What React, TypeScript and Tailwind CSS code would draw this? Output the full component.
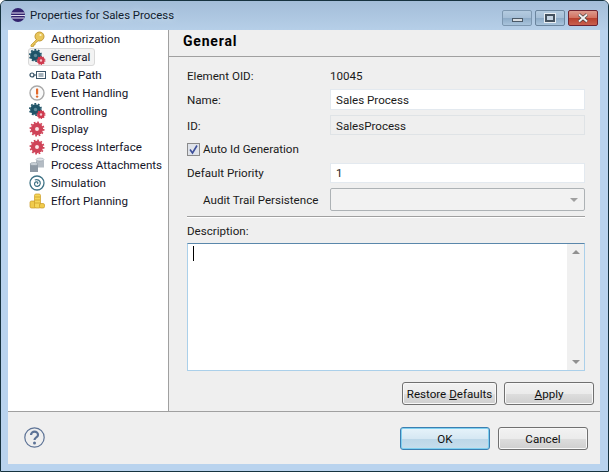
import React from 'react';

const Gear: React.FC<{ x: number; y: number; r: number; color: string; hole: string; teeth?: number }> = ({ x, y, r, color, hole, teeth = 10 }) => (
  <g>
    <circle cx={x} cy={y} r={r * 0.82} fill={color} />
    <circle cx={x} cy={y} r={r * 0.88} fill="none" stroke={color} strokeWidth={r * 0.24} strokeDasharray={`${(2 * Math.PI * r * 0.88) / (teeth * 2)}`} />
    <circle cx={x} cy={y} r={r * 0.26} fill={hole} />
  </g>
);

const icons: Record<string, React.ReactNode> = {
  key: (
    <svg width="16" height="16" viewBox="0 0 16 16">
      <circle cx="10.5" cy="5.500" r="4.500" fill="#e8c55a" stroke="#c39a35" />
      <circle cx="11.500" cy="4" r="1.100" fill="#fff6c8" />
      <path d="M8 8 2 14v1.500h2.500V14H6v-1.500l3.500-3" fill="#e8c55a" stroke="#c39a35" strokeWidth="0.8" />
    </svg>
  ),
  gears: (
    <svg width="17" height="16" viewBox="0 0 17 16">
      <Gear x={6.500} y={6.500} r={6.500} color="#1f5468" hole="#5f8b9b" />
      <Gear x={12} y={11.500} r={4.500} color="#cf3b4f" hole="#f4c9cf" />
    </svg>
  ),
  dataPath: (
    <svg width="17" height="16" viewBox="0 0 17 16" fill="none">
      <circle cx="3" cy="8" r="2" stroke="#2c4a60" strokeWidth="1.200" />
      <path d="M5 8h2.500" stroke="#2c4a60" />
      <rect x="7.500" y="4.500" width="9" height="7" fill="#fff" stroke="#3b5468" />
      <path d="M9.500 7h5M9.500 9h5" stroke="#4a6478" />
    </svg>
  ),
  warning: (
    <svg width="16" height="16" viewBox="0 0 16 16">
      <circle cx="8" cy="8" r="7" fill="#fafafa" stroke="#a9a9a9" strokeWidth="1.400" />
      <rect x="7" y="3.500" width="2.200" height="6" rx="0.600" fill="#e2682a" />
      <circle cx="8.100" cy="11.600" r="1.200" fill="#e2682a" />
    </svg>
  ),
  redGear: (
    <svg width="16" height="16" viewBox="0 0 16 16">
      <Gear x={8} y={8} r={7.500} color="#cf4358" hole="#fbe6e8" teeth={12} />
    </svg>
  ),
  cylinders: (
    <svg width="16" height="16" viewBox="0 0 16 16">
      <path d="M7 2.500h8v8H7z" fill="#b4bcc4" />
      <ellipse cx="11" cy="2.500" rx="4" ry="1.500" fill="#dfe4e8" stroke="#8d98a2" strokeWidth="0.500" />
      <path d="M1 7h8v8H1z" fill="#8f9aa5" />
      <ellipse cx="5" cy="7" rx="4" ry="1.500" fill="#ccd3d9" stroke="#7d8893" strokeWidth="0.500" />
    </svg>
  ),
  spiral: (
    <svg width="16" height="16" viewBox="0 0 16 16" fill="none">
      <circle cx="8" cy="8" r="7" stroke="#3f7386" strokeWidth="1.300" />
      <path d="M8 8.500c1 .3 1.300-1.500-.3-1.700-2-.2-2.800 2-1.700 3.500 1.500 1.800 5 1 5.300-1.800.3-3-3-4.800-5.500-3.500" stroke="#3f7386" strokeWidth="1.200" />
    </svg>
  ),
  coins: (
    <svg width="16" height="16" viewBox="0 0 16 16">
      <rect x="1" y="8" width="6" height="7" rx="1.500" fill="#f0cb4c" stroke="#c99a22" strokeWidth="0.700" />
      <rect x="5.500" y="1" width="6" height="14" rx="1.500" fill="#f5d658" stroke="#c99a22" strokeWidth="0.700" />
      <path d="M6 4h5M6 7h5M6 10h5" stroke="#c99a22" strokeWidth="0.700" />
      <rect x="10.500" y="10.500" width="5" height="4.500" rx="1.500" fill="#f0cb4c" stroke="#c99a22" strokeWidth="0.700" />
    </svg>
  ),
};

const navItems = [
  { label: 'Authorization', icon: 'key' },
  { label: 'General', icon: 'gears', selected: true },
  { label: 'Data Path', icon: 'dataPath' },
  { label: 'Event Handling', icon: 'warning' },
  { label: 'Controlling', icon: 'gears' },
  { label: 'Display', icon: 'redGear' },
  { label: 'Process Interface', icon: 'redGear' },
  { label: 'Process Attachments', icon: 'cylinders' },
  { label: 'Simulation', icon: 'spiral' },
  { label: 'Effort Planning', icon: 'coins' },
];

const inputClass = 'flex items-center border border-[#e3e9ef] bg-white pl-[5px] text-[#1a1a1a]';

const DialogButton: React.FC<{ children: React.ReactNode; w: string; primary?: boolean }> = ({ children, w, primary }) => (
  <button
    className={
      primary
        ? `h-[23px] ${w} whitespace-nowrap rounded-[3px] border border-[#3c7fb1] bg-[linear-gradient(#e6f3fa_0%,#d6e8f3_50%,#bcd7e8_52%,#c6deec_100%)] text-[#111] shadow-[inset_0_0_0_1px_#7fd0f0]`
        : `h-[23px] ${w} whitespace-nowrap rounded-[3px] border border-[#707070] bg-[linear-gradient(#f2f2f2_0%,#ebebeb_50%,#dddddd_52%,#cfcfcf_100%)] text-[#111] shadow-[inset_0_0_0_1px_#f8f8f8]`
    }
  >
    {children}
  </button>
);

export default function App() {
  return (
    <div className="flex h-[472px] w-[609px] flex-col overflow-hidden rounded-t-[6px] border border-[#16323f] bg-[#b9d3ee] font-['Roboto',sans-serif] text-[11.6px] leading-[16px] text-[#1a1a1a]">
      {/* title bar */}
      <div className="flex h-[29px] shrink-0 items-start justify-between bg-[linear-gradient(#a3bdd8,#b6cfe8)] pl-[9px] pr-[10px]">
        <div className="mt-[6px] flex items-center gap-[4px]">
          <svg width="16" height="16" viewBox="0 0 16 16">
            <circle cx="8" cy="8" r="7" fill="#32236e" />
            <path d="M1.500 6h13M1 8.500h14M2 11h12" stroke="#e4e0f0" strokeWidth="1.100" />
          </svg>
          <span className="text-[11.4px] text-[#10202e] [text-shadow:0_0_6px_#d8e6f2]">Properties for Sales Process</span>
        </div>
        <div className="mt-[9px] flex gap-[3px]">
          <div className="flex h-[16px] w-[30px] items-end justify-center rounded-[2px] border border-[#7d97b0] bg-[linear-gradient(#b4cbe0_0%,#a5bed6_50%,#8dabc7_52%,#a9c4dc_100%)] pb-[3px]">
            <div className="h-[4px] w-[11px] border border-[#4b5a68] bg-[#d8dde2]" />
          </div>
          <div className="flex h-[16px] w-[30px] items-center justify-center rounded-[2px] border border-[#6b859e] bg-[linear-gradient(#b4cbe0_0%,#a5bed6_50%,#8dabc7_52%,#a9c4dc_100%)]">
            <div className="h-[8px] w-[10px] border-2 border-[#44515e] bg-[#c6d5e3] outline outline-[#e8eef3]" />
          </div>
          <div className="flex h-[16px] w-[30px] items-center justify-center rounded-[2px] border border-[#6e2230] bg-[linear-gradient(#dd9a8d_0%,#d2705f_50%,#b8402e_52%,#c9604e_100%)]">
            <svg width="12" height="10" viewBox="0 0 12 10">
              <path d="M2 1.500 10 8.500M10 1.500 2 8.500" stroke="#3c3c3c" strokeWidth="3.200" />
              <path d="M2 1.500 10 8.500M10 1.500 2 8.500" stroke="#f2f2f2" strokeWidth="2" />
            </svg>
          </div>
        </div>
      </div>

      {/* client area */}
      <div className="ml-[7px] mr-[8px] flex h-[434px] flex-col bg-[#efefef]">
        <div className="flex h-[382px] border-b border-[#a0a0a0]">
          <div className="w-[161px] shrink-0 border-r border-[#a0a0a0] bg-white pl-[21px]">
            {navItems.map(item => (
              <div key={item.label} className="flex h-[18px] items-center">
                <div className={item.selected ? '-ml-[1px] flex h-[18px] items-center rounded-[3px] border border-[#d9d9d9] bg-[#f3f3f3] pr-[4px]' : 'flex items-center'}>
                  <span className="flex w-[22px] shrink-0 items-center">{icons[item.icon]}</span>
                  <span className="whitespace-nowrap text-[#141428]">{item.label}</span>
                </div>
              </div>
            ))}
          </div>

          <div className="flex min-w-0 flex-1 flex-col">
            <div className="flex h-[27px] shrink-0 items-center border-b border-[#a0a0a0] pb-[5px] pl-[14px] text-[14px] font-bold tracking-[0.8px] text-black">General</div>
            <div className="flex flex-1 flex-col pl-[18px] pr-[6px]">
              <div className="mr-[9px] flex flex-1 flex-col">
                <div className="mt-[11px] flex h-[16px] items-center">
                  <span className="w-[143px]">Element OID:</span>
                  <span>10045</span>
                </div>
                <div className="mt-[5px] flex h-[21px] items-center">
                  <span className="w-[143px] pt-px">Name:</span>
                  <div className={`${inputClass} h-[21px] flex-1 pt-px`}>Sales Process</div>
                </div>
                <div className="mt-[5px] flex h-[20px] items-center">
                  <span className="w-[143px] pt-px">ID:</span>
                  <div className="flex h-[20px] flex-1 items-center border border-[#dfe3e6] bg-[#efefef] pl-[5px] pt-px">SalesProcess</div>
                </div>
                <div className="mt-[5px] flex h-[18px] items-center">
                  <div className="flex h-[13px] w-[13px] items-center justify-center border border-[#8a8a8a] bg-[#dfe3ea]">
                    <svg width="11" height="11" viewBox="0 0 11 11" fill="none">
                      <path d="M2 5.500 4.500 9 9 1.500" stroke="#3d4f9a" strokeWidth="1.600" />
                    </svg>
                  </div>
                  <span className="ml-[3px]">Auto Id Generation</span>
                </div>
                <div className="mt-[5px] flex h-[20px] items-center">
                  <span className="w-[143px]">Default Priority</span>
                  <div className={`${inputClass} h-[20px] flex-1`}>1</div>
                </div>
                <div className="mt-[5px] flex h-[23px] items-center">
                  <span className="w-[143px] whitespace-nowrap pl-[16px]">Audit Trail Persistence</span>
                  <div className="flex h-[23px] flex-1 items-center justify-end rounded-[2px] border border-[#adb2b5] bg-[#f2f2f2] pr-[6px]">
                    <div className="h-0 w-0 border-x-[4px] border-t-[4px] border-x-transparent border-t-[#a0a0a0]" />
                  </div>
                </div>
                <div className="mt-[5px] border-t border-[#a0a0a0] shadow-[0_1px_0_#fff]" />
                <div className="mt-[5px] flex h-[16px] items-center pt-px">Description:</div>
                <div className="mt-[5px] flex h-[128px] border border-[#abd0ea] border-t-[#5a87ab] bg-white">
                  <div className="relative flex-1">
                    <div className="absolute left-[5px] top-[2px] h-[15px] w-px bg-black" />
                  </div>
                  <div className="flex w-[17px] flex-col items-center justify-between bg-[#f0f0f0] py-[6px]">
                    <div className="h-0 w-0 border-x-[4px] border-b-[4px] border-x-transparent border-b-[#909090]" />
                    <div className="h-0 w-0 border-x-[4px] border-t-[4px] border-x-transparent border-t-[#909090]" />
                  </div>
                </div>
              </div>
              <div className="mb-[6px] mt-[11px] flex justify-end gap-[7px]">
                <DialogButton w="w-[95px]">Restore <u>D</u>efaults</DialogButton>
                <DialogButton w="w-[90px]"><u>A</u>pply</DialogButton>
              </div>
            </div>
          </div>
        </div>

        <div className="flex flex-1 items-start justify-between pl-[16px] pr-[12px]">
          <svg className="mt-[15px]" width="21" height="21" viewBox="0 0 21 21" fill="none">
            <circle cx="10.500" cy="10.500" r="9.700" stroke="#5d7396" strokeWidth="1.200" />
            <path d="M7 8c0-4.500 7.200-4.500 7 0 0 2.500-3.500 2.400-3.500 5" stroke="#5d7396" strokeWidth="2.200" />
            <circle cx="10.500" cy="16" r="1.500" fill="#5d7396" />
          </svg>
          <div className="mt-[15px] flex gap-[8px]">
            <DialogButton w="w-[90px]" primary>OK</DialogButton>
            <DialogButton w="w-[90px]">Cancel</DialogButton>
          </div>
        </div>
      </div>
    </div>
  );
}
